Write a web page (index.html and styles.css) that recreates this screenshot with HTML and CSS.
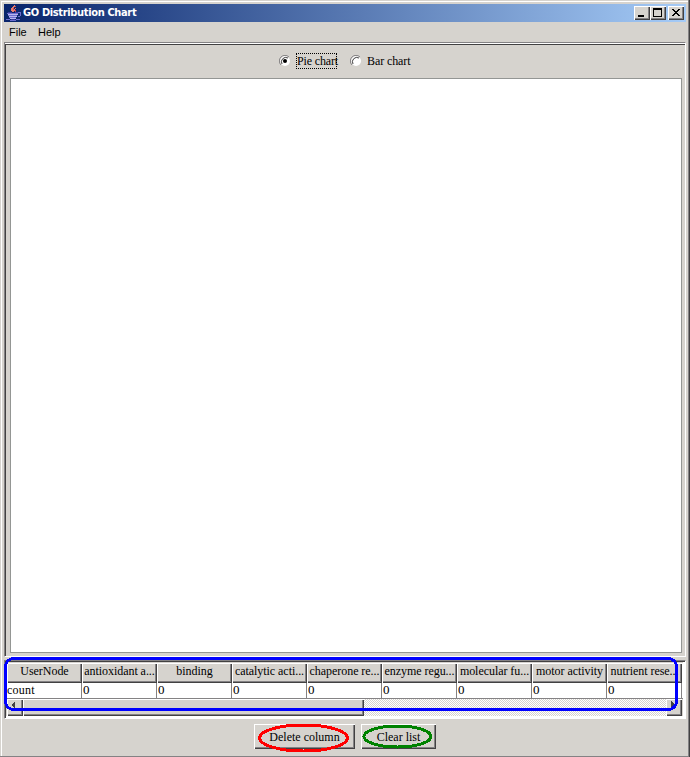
FILE: index.html
```
<!DOCTYPE html>
<html lang="en">
<head>
<meta charset="utf-8">
<title>GO Distribution Chart</title>
<link rel="stylesheet" href="styles.css">
</head>
<body>
<div class="window">
  <header class="titlebar">
    <svg class="java" width="16" height="16" viewBox="0 0 16 16" shape-rendering="crispEdges" fill="none">
      <path d="M8.5 0v2M7.5 1v3M6.5 2v3M5.5 3v3M6.5 5v2M9.5 3v1M8.5 4v2M7.5 5v2" stroke="#e77b6b"/>
      <path d="M9.5 1v1M7.5 3v2M9.5 5v2" stroke="#c6414a"/>
      <path d="M1 8.5h11M2 10.5h9M3 12.5h7M0 14.5h4M10 14.5h4M4 15.5h6M12 7.5h3M14.5 8v3M12 11.5h2" stroke="#6b6bce"/>
      <path d="M2 9.5h10M3 11.5h8M4 13.5h6" stroke="#b5b5ef"/>
      <path d="M2 7.5h4M9 7.5h3M5 14.5h4" stroke="#39399c"/>
    </svg>
    <h1>GO Distribution Chart</h1>
    <div class="controls">
      <button class="ctl" aria-label="Minimize"><svg width="16" height="14" shape-rendering="crispEdges"><path d="M4 9h6v2H4z"/></svg></button>
      <button class="ctl" aria-label="Maximize"><svg width="16" height="14" shape-rendering="crispEdges"><path fill-rule="evenodd" d="M3 2h9v9H3zM4 4h7v6H4z"/></svg></button>
      <button class="ctl close" aria-label="Close"><svg width="16" height="14" shape-rendering="crispEdges"><path d="M4 3h2v1h1v1h2V4h1V3h2v1h-1v1h-1v1H9v1h1v1h1v1h1v1h-2V9H9V8H7v1H6v1H4V9h1V8h1V7h1V6H6V5H5V4H4z"/></svg></button>
    </div>
  </header>
  <nav class="menu"><span class="file">File</span><span class="help">Help</span></nav>
  <main class="panel">
    <div class="options">
      <label class="option"><svg class="radio" width="12" height="12" viewBox="0 0 12 12"><circle cx="6" cy="6" r="5" fill="#fff"/><path d="M2 10A5.5 5.5 0 0 1 10 2" fill="none" stroke="#848284"/><path d="M3 9A4.4 4.4 0 0 1 9 3" fill="none" stroke="#424142"/><circle cx="6" cy="6" r="2" fill="#000"/></svg><span class="focus pie">Pie chart</span></label>
      <label class="option second"><svg class="radio" width="12" height="12" viewBox="0 0 12 12"><circle cx="6" cy="6" r="5" fill="#fff"/><path d="M2 10A5.5 5.5 0 0 1 10 2" fill="none" stroke="#848284"/><path d="M3 9A4.4 4.4 0 0 1 9 3" fill="none" stroke="#424142"/></svg><span class="bar">Bar chart</span></label>
    </div>
    <div class="canvas"></div>
  </main>
  <section class="tablepane">
    <div class="grid head">
      <span><b class="w46">UserNode</b></span><span><b class="w70">antioxidant a...</b></span><span><b>binding</b></span><span><b>catalytic acti...</b></span><span><b>chaperone re...</b></span><span><b>enzyme regu...</b></span><span><b>molecular fu...</b></span><span><b>motor activity</b></span><span><b>nutrient rese...</b></span><span></span>
    </div>
    <div class="grid row">
      <span class="count">count</span><span>0</span><span>0</span><span>0</span><span>0</span><span>0</span><span>0</span><span>0</span><span>0</span><span></span>
    </div>
    <div class="scroll">
      <div class="arrow left"><svg width="13" height="13" shape-rendering="crispEdges"><path d="M8 2v8L4 6z" fill="#424142"/></svg></div>
      <div class="thumb"></div>
      <div class="track"></div>
      <div class="arrow"><svg width="13" height="13" shape-rendering="crispEdges"><path d="M5 2v8l4-4z" fill="#424142"/></svg></div>
    </div>
  </section>
  <footer class="actions">
    <button class="btn delete"><span>Delete column</span></button>
    <button class="btn clear"><span>Clear list</span></button>
  </footer>
  <svg class="marks" width="690" height="757" fill="none" stroke-width="3" shape-rendering="crispEdges">
    <rect x="5.5" y="658.5" width="671" height="51" rx="8" stroke="#00f"/>
    <ellipse cx="303.5" cy="738" rx="44" ry="13" stroke="#f00"/>
    <ellipse cx="397.5" cy="736.5" rx="33.5" ry="10.5" stroke="#008200"/>
  </svg>
</div>
</body>
</html>
```
FILE: styles.css
```
* { box-sizing: border-box; }
body { margin: 0; overflow: hidden; background: #d6d3ce; }
.window {
  position: relative; width: 690px; height: 757px; padding: 4px 4px 0; background: #d6d3ce;
  font: 12px "Liberation Serif", serif; color: #000;
  box-shadow: inset -1px 0 #424142, inset -2px -1px #848284, inset 1px 1px #d6d3ce, inset 2px 2px #fff;
}
.titlebar { display: flex; align-items: center; width: 682px; height: 18px; padding-left: 2px; background: linear-gradient(90deg, #08246b, #a5cbf7); }
.java { margin-right: 1px; }
h1 { margin: 0; color: #fff; font: bold 11px/18px "DejaVu Sans Condensed", "DejaVu Sans", sans-serif; letter-spacing: -.35px; white-space: nowrap; }
.controls { display: flex; margin-left: auto; padding-right: 2px; }
.ctl { width: 16px; height: 14px; padding: 0; border: 0; background: #d6d3ce; box-shadow: inset 1px 1px #fff, inset -1px -1px #424142, inset -2px -2px #848284; }
.ctl svg { display: block; }
.close { margin-left: 2px; }
.menu { display: flex; height: 20px; padding-left: 5px; font: 11px/20px "Liberation Sans", sans-serif; }
.file { width: 29px; }
.panel { width: 682px; height: 615px; border: solid; border-width: 1px; border-color: #848284 #fff #fff #848284; padding: 1px 0 0 1px; box-shadow: inset 0 1px #fff, inset 1px 2px #424142; }
.options { display: flex; height: 34px; padding: 9px 0 0 272px; }
.option { display: flex; height: 16px; line-height: 16px; align-items: center; white-space: nowrap; }
.radio { margin: 0 5px 0 1px; }
.focus { height: 16px; width: 41px; line-height: 14px; border: 1px dotted #000; }
.pie { letter-spacing: -.15px; }
.bar { letter-spacing: -.1px; }
.second { margin-left: 12px; }
.canvas { width: 672px; height: 575px; margin-left: 4px; border: 1px solid #949694; background: #fff; }
.tablepane { height: 59px; width: 682px; margin-top: 3px; padding: 2px 3px 0 2px; border: solid; border-width: 1px; border-color: #848284 #fff #fff #848284; box-shadow: inset 1px 1px #424142, inset -2px -2px #fff; }
.grid { display: grid; grid-template-columns: repeat(9, 75px) 1px; overflow: hidden; width: 676px; }
.head { height: 20px; }
.head span { height: 20px; line-height: 17px; text-align: center; white-space: nowrap; overflow: hidden; box-shadow: inset 1px 1px #fff, inset -1px -1px #424142, inset -2px -2px #848284; }
.head b { font-weight: 400; letter-spacing: -.05px; }
.row { height: 16px; background: #fff; }
.row span { border: solid #848284; border-width: 0 1px 1px 0; height: 16px; line-height: 14px; padding-left: 1px; font-size: 13px; }
.row .count { padding-left: 0; font-size: 12px; letter-spacing: .2px; }
.scroll { display: flex; height: 17px; background: #d6d3ce; }
.arrow, .thumb { height: 17px; box-shadow: inset 1px 1px #fff, inset -1px -1px #424142, inset -2px -2px #848284; background: #d6d3ce; }
.arrow { width: 16px; }
.thumb { width: 341px; }
.track { flex: 1; background: repeating-conic-gradient(#d6d3ce 0 25%, #fff 0 50%) 0 0 / 2px 2px; }
.actions { display: flex; gap: 6px; padding: 5px 0 0 250px; }
.btn { height: 25px; padding: 0; border: 0; background: #d6d3ce; color: #000; font: 12px/24px "Liberation Serif", serif; white-space: nowrap; box-shadow: inset 1px 1px #fff, inset -1px -1px #424142, inset -2px -2px #848284; }
.delete { width: 101px; }
.clear { width: 75px; }
.marks { position: absolute; left: 0; top: 0; pointer-events: none; }
```
